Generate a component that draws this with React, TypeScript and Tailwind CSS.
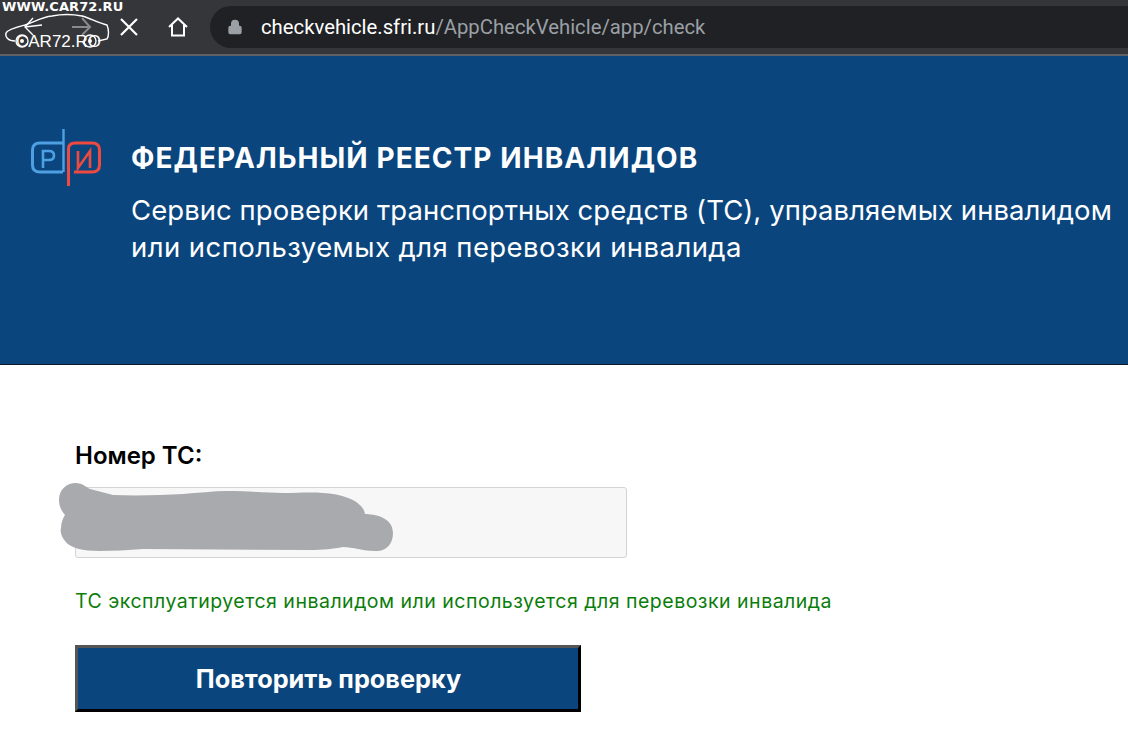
import React from 'react';
import { Lock } from 'lucide-react';

const font = { fontFamily: 'Inter, "Noto Sans", sans-serif' };

function Watermark() {
  return (
    <div className="absolute left-0 top-0 w-[116px] h-[52px]">
      <div className="absolute left-[2px] top-0 whitespace-nowrap text-[13px] leading-[13px] font-bold tracking-[0.1px] text-white [font-family:'DejaVu_Sans',sans-serif]">WWW.CAR72.RU</div>
      <svg className="absolute left-0 top-0" width="116" height="52" viewBox="0 0 116 52" fill="none">
        <path d="M15 41 C8 41 5 37 6 33 C8 29 17 27 25 25 C34 22 42 17 52 16 C62 14 72 14 82 16 C90 18 98 23 107 25 C109 30 109 36 107 39 L98 41" stroke="#fff" strokeWidth="1.4" />
        <path d="M42 25 L25 27 M33 18 L25 27 L33 35" stroke="#fff" strokeWidth="1.4" />
        <path d="M72 27 L90 27 M82 18 L90 27 L82 35" stroke="#8a8a8a" strokeWidth="2" />
        <circle cx="22" cy="41" r="6" stroke="#fff" strokeWidth="1.4" />
        <circle cx="22" cy="41" r="2" fill="#fff" />
        <circle cx="90" cy="41" r="6" stroke="#fff" strokeWidth="1.4" />
        <circle cx="90" cy="41" r="2" fill="#fff" />
      </svg>
      <div className="absolute left-[16px] top-[33px] whitespace-nowrap text-[17px] leading-[18px] text-white [font-family:'Liberation_Sans',sans-serif]">CAR72.RO</div>
    </div>
  );
}

function BrowserBar() {
  return (
    <div className="relative flex items-center h-[56px] shrink-0 bg-[#35363a] border-b-2 border-[#5f6063] pl-[118px]">
      <Watermark />
      <svg width="22" height="22" viewBox="0 0 22 22" fill="none" className="mt-[-1px]">
        <path d="M3 3 L19 19 M19 3 L3 19" stroke="#fff" strokeWidth="2.2" />
      </svg>
      <svg width="22" height="22" viewBox="0 0 22 22" fill="none" className="ml-[27px] mt-[-1px]">
        <path d="M2 11 L11 2.5 L20 11 M5 9 V19.5 H17 V9" stroke="#fff" strokeWidth="2" />
      </svg>
      <div className="ml-[21px] flex-1 flex items-center h-[42px] rounded-l-[21px] bg-[#202124] pl-[17px]">
        <Lock size={16} className="text-[#9aa0a6]" fill="#9aa0a6" />
        <div className="ml-[18px] mt-[1px] text-[20.3px] whitespace-nowrap text-[#9aa0a6] [font-family:'Roboto',sans-serif]">
          <span className="text-white">checkvehicle.sfri.ru</span>/AppCheckVehicle/app/check
        </div>
      </div>
    </div>
  );
}

function Logo() {
  return (
    <svg width="74" height="60" viewBox="0 0 74 60" fill="none" className="shrink-0">
      <path d="M34 15 H11 Q3.5 15 3.5 22 V37 Q3.5 44 11 44 H34" stroke="#4f9fe3" strokeWidth="3" />
      <path d="M34.5 1 V44" stroke="#4f9fe3" strokeWidth="2.4" />
      <path d="M39.5 58 V21 Q39.5 15 46 15 H63 Q70.5 15 70.5 22 V37 Q70.5 44 63 44 H45" stroke="#ee4a40" strokeWidth="3" />
      <path d="M14 40 V23 H20 Q25 23 25 27.5 Q25 32 20 32 H14" stroke="#4f9fe3" strokeWidth="2.6" />
      <path d="M49 23 V40 L61 23 V40" stroke="#ee4a40" strokeWidth="2.6" />
    </svg>
  );
}

export default function App() {
  return (
    <div className="w-[1128px] h-[733px] overflow-hidden bg-white flex flex-col" style={font}>
      <BrowserBar />
      <header className="h-[309px] shrink-0 bg-[#0a457e] border-b border-[#0b1a2a] flex items-start pt-[72px] pl-[29px] text-white">
        <Logo />
        <div className="ml-[28px] mt-[12px]">
          <h1 className="text-[28px] leading-[36px] font-bold tracking-[1.07px] whitespace-nowrap">ФЕДЕРАЛЬНЫЙ РЕЕСТР ИНВАЛИДОВ</h1>
          <p className="mt-[16px] text-[27.5px] leading-[37px] whitespace-nowrap">
            <span className="block tracking-[0.06px]">Сервис проверки транспортных средств (ТС), управляемых инвалидом</span>
            <span className="block tracking-[0.43px]">или используемых для перевозки инвалида</span>
          </p>
        </div>
      </header>
      <main className="pl-[75px] pt-[77px]">
        <label className="block text-[24px] leading-[28px] font-semibold text-black">Номер ТС:</label>
        <div className="relative mt-[17px] w-[552px] h-[71px] rounded-[3px] border border-[#d4d4d4] bg-[#f7f7f7]">
          <svg className="absolute left-[-18px] top-[-5px]" width="338" height="70" viewBox="0 0 338 70" fill="none">
            <path d="M1 17 C1 6 9 0 18 0 C24 0 28 4 32 6 L55 12 C80 13 105 12 125 11 C140 10 155 8 169 8 C190 8 208 10 225 10 C240 10 252 9 265 10 C285 11 305 18 307 31 C316 31 335 34 335 50 C335 62 327 69 317 68 C305 68 295 64 285 64 C275 66 265 67 252 67 L85 66 C70 67 55 68 42 68 C25 68 12 65 7 58 C3 53 2 48 3 45 C3 40 5 35 7 32 C3 27 1 23 1 17 Z" fill="#a9aaad" />
          </svg>
        </div>
        <p className="mt-[31px] text-[19.5px] leading-[24px] tracking-[0.5px] text-[#0a7d0a] whitespace-nowrap">ТС эксплуатируется инвалидом или используется для перевозки инвалида</p>
        <button className="mt-[32px] block w-[506px] h-[67px] border-[3px] border-t-[#555] border-l-[#555] border-r-black border-b-black bg-[#0a457e] pl-[1px] text-white text-[25.3px] font-bold">
          Повторить проверку
        </button>
      </main>
    </div>
  );
}
